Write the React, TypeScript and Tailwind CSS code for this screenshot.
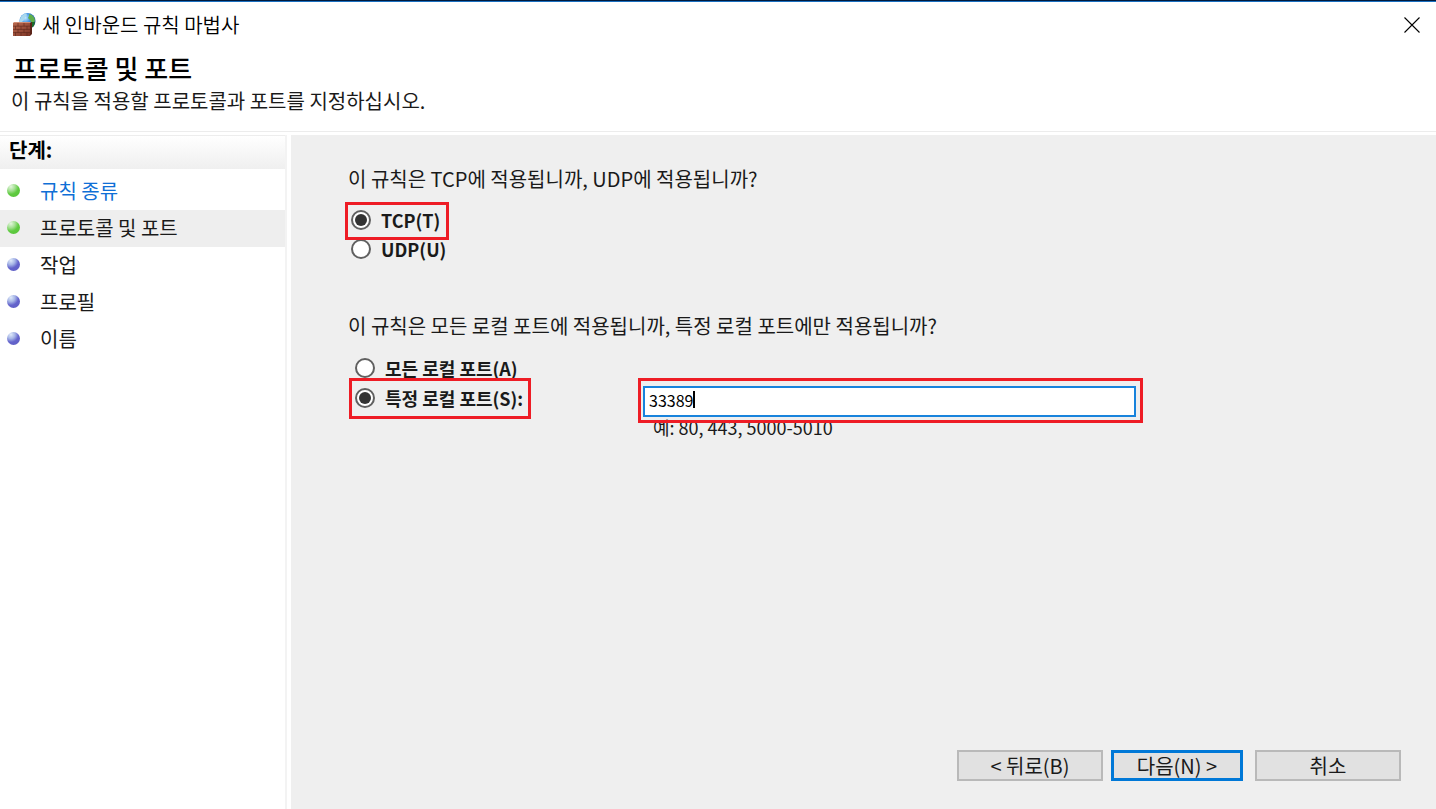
import { useState } from 'react'
import type { ReactNode } from 'react'

const STEPS = [
  { label: '규칙 종류', state: 'done' },
  { label: '프로토콜 및 포트', state: 'current' },
  { label: '작업', state: 'todo' },
  { label: '프로필', state: 'todo' },
  { label: '이름', state: 'todo' },
]

function FirewallIcon() {
  return (
    <svg viewBox="0 0 24 24" className="size-6 shrink-0" aria-hidden="true">
      <defs>
        <radialGradient id="globe" cx="0.35" cy="0.3" r="0.75">
          <stop offset="0" stopColor="#c9ecff" />
          <stop offset="0.45" stopColor="#3f92e2" />
          <stop offset="1" stopColor="#123f94" />
        </radialGradient>
        <linearGradient id="brick" x1="0" y1="0" x2="1" y2="1">
          <stop offset="0" stopColor="#b8684e" />
          <stop offset="1" stopColor="#7d3526" />
        </linearGradient>
      </defs>
      <circle cx="15.5" cy="8" r="8" fill="url(#globe)" />
      <path d="M8 6c1-3 3-4.500 6-5.500l1 1.500-2 2-1 3-2 2-2 0z" fill="#a9d8ee" />
      <path d="M17 1l3 1 2.500 3 .5 3-2 2-2-1-1-2-2-2 1-2z" fill="#5fae4a" />
      <path d="M19 9l4 0-1 4-3 2z" fill="#1c6a2a" />
      <path d="M1 10l1-1h17l-1 1z" fill="#d08d74" />
      <path d="M18 10l2-1v12l-2 2z" fill="#5b2419" />
      <rect x="1" y="10" width="17" height="13" fill="url(#brick)" />
      <path
        d="M1 13.200h17M1 16.400h17M1 19.600h17M6 10v3.200M12 10v3.200M3.500 13.200v3.200M9 13.200v3.200M15 13.200v3.200M6 16.400v3.200M12 16.400v3.200M3.500 19.600V23M9 19.600V23M15 19.600V23"
        stroke="#5a2519"
        strokeWidth="0.6"
        fill="none"
      />
    </svg>
  )
}

function StepDot({ active }: { active: boolean }) {
  return (
    <span
      className={`size-[13px] shrink-0 rounded-full ${
        active
          ? 'bg-[radial-gradient(circle_at_30%_20%,#e4f6de_0%,#a5e094_30%,#5fcb40_55%,#55c038_100%)]'
          : 'bg-[radial-gradient(circle_at_30%_20%,#dfeafa_0%,#a5b4e6_30%,#6464cc_55%,#5c5cc0_100%)]'
      }`}
    />
  )
}

// Red marker frame drawn over the control it points at
function Marker({ className }: { className: string }) {
  return <span className={`pointer-events-none absolute z-10 border-3 border-[#ee1c25] ${className}`} />
}

interface RadioProps {
  name: string
  checked: boolean
  onChange: () => void
  className: string
  children: ReactNode
}

function Radio({ name, checked, onChange, className, children }: RadioProps) {
  return (
    <label className={`flex w-fit items-center gap-[10px] text-[18px] font-bold ${className}`}>
      <input
        type="radio"
        name={name}
        checked={checked}
        onChange={onChange}
        className="grid size-5 shrink-0 appearance-none place-items-center rounded-full border-2 border-[#606060] bg-white before:size-3 before:rounded-full before:content-[''] checked:before:bg-[#333333]"
      />
      {children}
    </label>
  )
}

export default function App() {
  const [protocol, setProtocol] = useState('tcp')
  const [scope, setScope] = useState('specific')
  const [ports, setPorts] = useState('33389')

  return (
    <div className="flex min-h-screen flex-col bg-white font-['Noto_Sans_CJK_KR',sans-serif] text-[20px] leading-7 text-[#1a1a1a]">
      <div className="h-[2px] border-b border-[#1a6fc0] bg-[#001a3d]" />

      <div className="flex h-[46px] items-center justify-between pr-4 pl-3">
        <div className="flex items-center gap-[6px] font-[350] text-black">
          <FirewallIcon />
          <span>새 인바운드 규칙 마법사</span>
        </div>
        <button type="button" aria-label="닫기" className="text-black">
          <svg viewBox="0 0 16 16" className="size-4" fill="none" stroke="currentColor" strokeWidth="1.1">
            <path d="M0.500 0.500l15 15M15.500 0.500l-15 15" />
          </svg>
        </button>
      </div>

      <header className="h-[84px] border-b border-[#ececec] px-[11px] pt-[6px]">
        <h1 className="pl-[2px] text-[26px] leading-7 font-medium text-black">프로토콜 및 포트</h1>
        <p className="mt-[5px]">이 규칙을 적용할 프로토콜과 포트를 지정하십시오.</p>
      </header>

      <div className="flex flex-1 gap-1 pt-[3px]">
        <nav className="w-[287px] shrink-0 border-r-2 border-[#f3f3f3]">
          <h2 className="h-[34px] border-t border-[#ededed] bg-linear-to-b from-white to-[#efefef] pl-[9px] font-bold text-black">
            단계:
          </h2>
          <ul className="pt-1">
            {STEPS.map((step) => (
              <li
                key={step.label}
                className={`flex h-[37px] items-center gap-5 pb-[2px] pl-[7px] ${step.state === 'current' ? 'bg-[#eeeeee]' : ''}`}
              >
                <StepDot active={step.state !== 'todo'} />
                {step.state === 'done' ? (
                  <a href="#" className="text-[#0f6fd6]">{step.label}</a>
                ) : (
                  <span>{step.label}</span>
                )}
              </li>
            ))}
          </ul>
        </nav>

        <main className="flex flex-1 flex-col bg-[#efefef] pt-[30px] pb-7">
          <div className="flex-1 pr-[300px] pl-[57px]">
            <fieldset>
              <legend>이 규칙은 TCP에 적용됩니까, UDP에 적용됩니까?</legend>
              <div className="relative mt-3 w-fit pl-[3px]">
                <Marker className="-top-[3px] -left-[3px] h-[38px] w-[104px]" />
                <Radio name="protocol" checked={protocol === 'tcp'} onChange={() => setProtocol('tcp')} className="h-[29px]">
                  TCP(T)
                </Radio>
                <Radio name="protocol" checked={protocol === 'udp'} onChange={() => setProtocol('udp')} className="h-[29px]">
                  UDP(U)
                </Radio>
              </div>
            </fieldset>

            <fieldset className="mt-[49px]">
              <legend>이 규칙은 모든 로컬 포트에 적용됩니까, 특정 로컬 포트에만 적용됩니까?</legend>
              <div className="mt-[13px] pl-[7px]">
                <Radio name="scope" checked={scope === 'all'} onChange={() => setScope('all')} className="h-[30px]">
                  모든 로컬 포트(A)
                </Radio>
                <div className="flex items-start">
                  <div className="relative w-[288px] shrink-0">
                    <Marker className="-top-[5px] -left-[6px] h-[41px] w-[182px]" />
                    <Radio
                      name="scope"
                      checked={scope === 'specific'}
                      onChange={() => setScope('specific')}
                      className="h-[30px]"
                    >
                      특정 로컬 포트(S):
                    </Radio>
                  </div>
                  <div className="flex-1 pt-[3px]">
                    <div className="relative">
                      <Marker className="-top-2 -right-[7px] -bottom-[6px] -left-[5px]" />
                      <input
                        type="text"
                        aria-label="특정 로컬 포트"
                        value={ports}
                        onChange={(e) => setPorts(e.target.value)}
                        className="block h-[31px] w-full border-2 border-[#1883dc] bg-white pb-1 pl-1 text-[16px] text-black outline-none"
                      />
                      <span className="absolute top-[5px] left-[50px] h-[17px] w-[2px] bg-black" />
                    </div>
                    <p className="pl-[10px] text-[18px] leading-5">예: 80, 443, 5000-5010</p>
                  </div>
                </div>
              </div>
            </fieldset>
          </div>

          <div className="flex justify-end pr-[35px]">
            <button type="button" className="h-[31px] w-[146px] border-2 border-[#b9b9b9] bg-[#e1e1e1] leading-6">
              &lt; 뒤로(B)
            </button>
            <button type="button" className="ml-2 h-[31px] w-[132px] border-3 border-[#0078d7] bg-[#e1e1e1] leading-6">
              다음(N) &gt;
            </button>
            <button type="button" className="ml-3 h-[31px] w-[146px] border-2 border-[#b9b9b9] bg-[#e1e1e1] leading-6">
              취소
            </button>
          </div>
        </main>
      </div>
    </div>
  )
}
